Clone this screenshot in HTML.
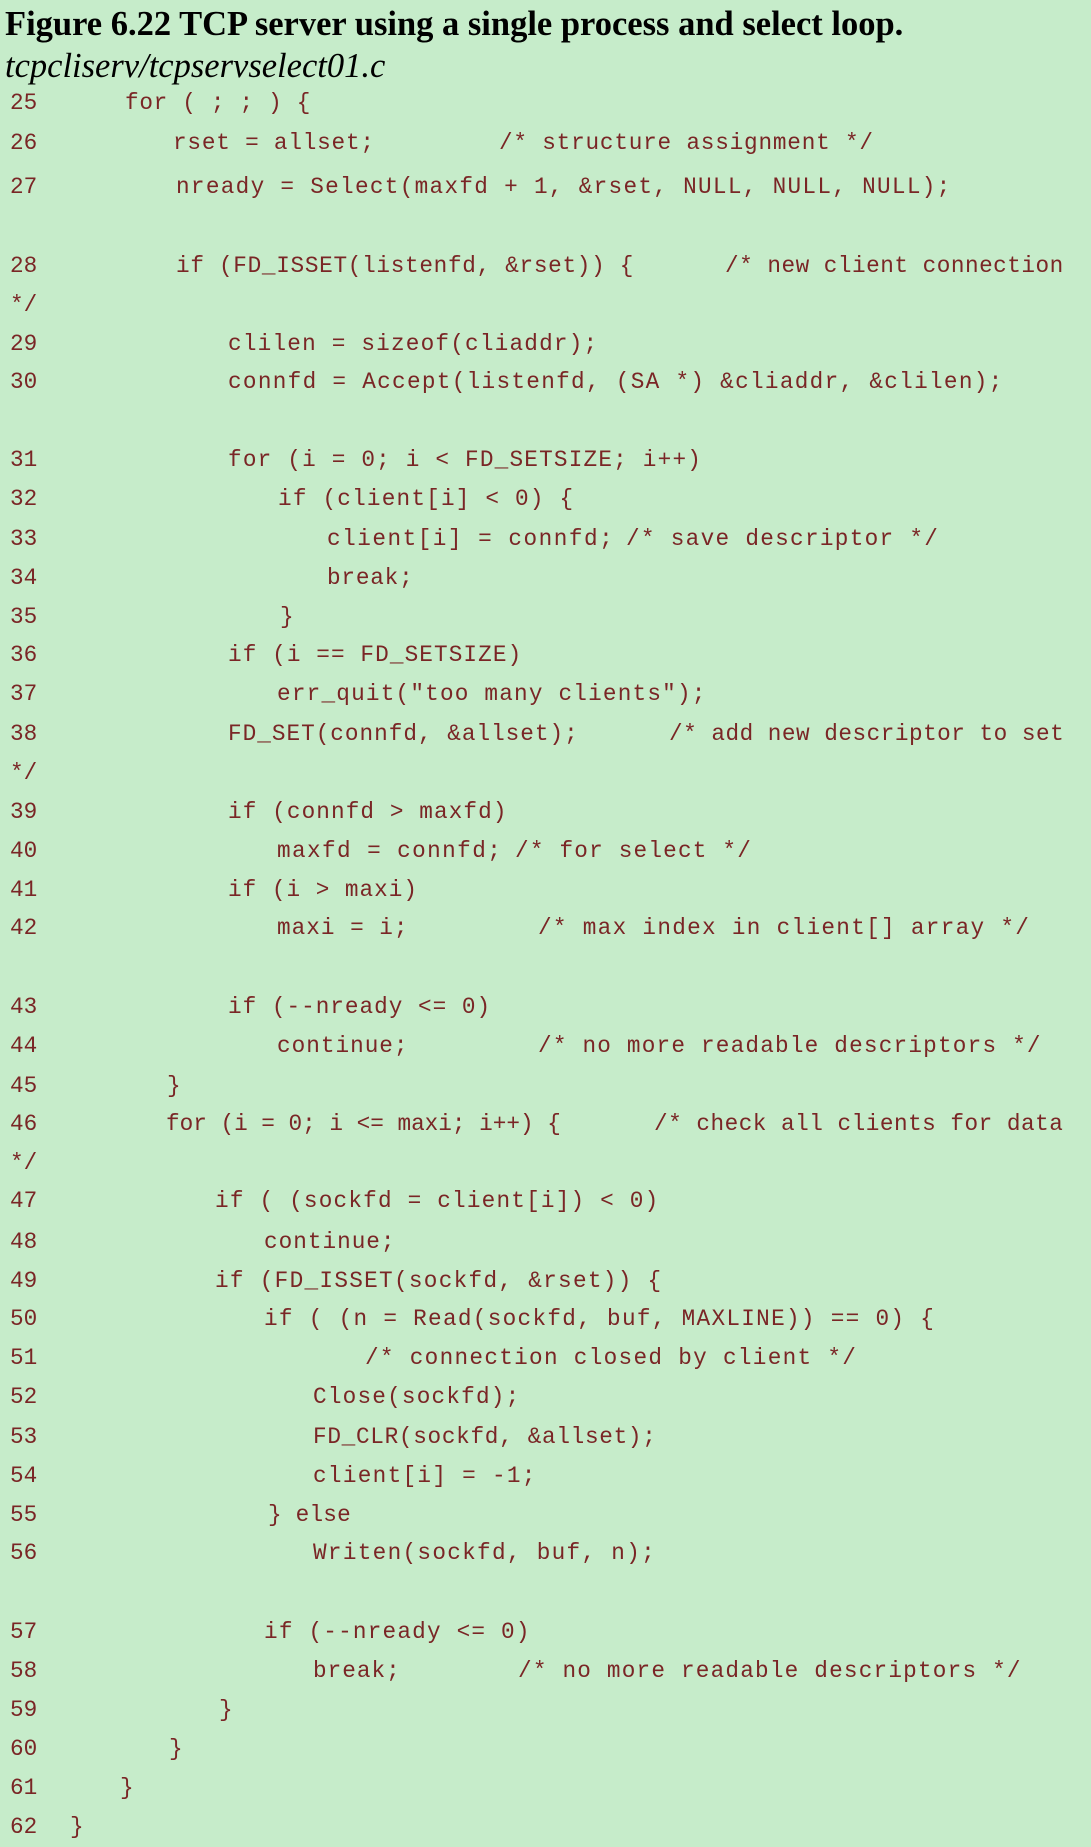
<!DOCTYPE html>
<html><head><meta charset="utf-8"><style>
html,body{margin:0;padding:0;}
body{width:1091px;height:1845px;background:#c6ecca;position:relative;overflow:hidden;}
.t{position:absolute;left:5px;top:5px;font-family:"Liberation Serif",serif;font-weight:bold;font-size:34.5px;color:#000;white-space:nowrap;}
.s{position:absolute;left:5px;top:47px;font-family:"Liberation Serif",serif;font-style:italic;font-size:34.5px;color:#000;white-space:nowrap;}
.l{position:absolute;font-family:"Liberation Mono",monospace;font-size:22.7px;line-height:40px;height:40px;color:#7a2626;white-space:pre;}
</style></head><body>
<div class="t">Figure 6.22 TCP server using a single process and select loop.</div>
<div class="s">tcpcliserv/tcpservselect01.c</div>

<div class="l" style="left:10px;top:83px">25</div><div class="l" style="left:125px;top:83px;letter-spacing:0.7px">for ( ; ; ) {</div>
<div class="l" style="left:10px;top:123px">26</div><div class="l" style="left:173px;top:123px;letter-spacing:0.8px">rset = allset;</div><div class="l" style="left:499px;top:123px;letter-spacing:0.8px">/* structure assignment */</div>
<div class="l" style="left:10px;top:167px">27</div><div class="l" style="left:176px;top:167px;letter-spacing:1.3px">nready = Select(maxfd + 1, &amp;rset, NULL, NULL, NULL);</div>
<div class="l" style="left:10px;top:246px">28</div><div class="l" style="left:176px;top:246px;letter-spacing:0.7px">if (FD_ISSET(listenfd, &amp;rset)) {</div><div class="l" style="left:725px;top:246px;letter-spacing:0.5px">/* new client connection</div>
<div class="l" style="left:10px;top:285px">*/</div>
<div class="l" style="left:10px;top:324px">29</div><div class="l" style="left:228px;top:324px;letter-spacing:1.2px">clilen = sizeof(cliaddr);</div>
<div class="l" style="left:10px;top:362px">30</div><div class="l" style="left:228px;top:362px;letter-spacing:1.3px">connfd = Accept(listenfd, (SA *) &amp;cliaddr, &amp;clilen);</div>
<div class="l" style="left:10px;top:440px">31</div><div class="l" style="left:228px;top:440px;letter-spacing:1.2px">for (i = 0; i &lt; FD_SETSIZE; i++)</div>
<div class="l" style="left:10px;top:479px">32</div><div class="l" style="left:278px;top:479px;letter-spacing:1.2px">if (client[i] &lt; 0) {</div>
<div class="l" style="left:10px;top:519px">33</div><div class="l" style="left:327px;top:519px;letter-spacing:1.5px">client[i] = connfd;</div><div class="l" style="left:626px;top:519px;letter-spacing:1.3px">/* save descriptor */</div>
<div class="l" style="left:10px;top:558px">34</div><div class="l" style="left:327px;top:558px;letter-spacing:0.8px">break;</div>
<div class="l" style="left:10px;top:597px">35</div><div class="l" style="left:280px;top:597px">}</div>
<div class="l" style="left:10px;top:635px">36</div><div class="l" style="left:228px;top:635px;letter-spacing:1.1px">if (i == FD_SETSIZE)</div>
<div class="l" style="left:10px;top:674px">37</div><div class="l" style="left:277px;top:674px;letter-spacing:1.2px">err_quit("too many clients");</div>
<div class="l" style="left:10px;top:714px">38</div><div class="l" style="left:228px;top:714px;letter-spacing:1.0px">FD_SET(connfd, &amp;allset);</div><div class="l" style="left:669px;top:714px;letter-spacing:0.5px">/* add new descriptor to set</div>
<div class="l" style="left:10px;top:753px">*/</div>
<div class="l" style="left:10px;top:792px">39</div><div class="l" style="left:228px;top:792px;letter-spacing:1.1px">if (connfd &gt; maxfd)</div>
<div class="l" style="left:10px;top:831px">40</div><div class="l" style="left:277px;top:831px;letter-spacing:1.4px">maxfd = connfd;</div><div class="l" style="left:515px;top:831px;letter-spacing:1.2px">/* for select */</div>
<div class="l" style="left:10px;top:870px">41</div><div class="l" style="left:228px;top:870px;letter-spacing:1.0px">if (i &gt; maxi)</div>
<div class="l" style="left:10px;top:908px">42</div><div class="l" style="left:277px;top:908px;letter-spacing:1.0px">maxi = i;</div><div class="l" style="left:538px;top:908px;letter-spacing:1.3px">/* max index in client[] array */</div>
<div class="l" style="left:10px;top:987px">43</div><div class="l" style="left:228px;top:987px;letter-spacing:1.0px">if (--nready &lt;= 0)</div>
<div class="l" style="left:10px;top:1026px">44</div><div class="l" style="left:277px;top:1026px;letter-spacing:1.0px">continue;</div><div class="l" style="left:538px;top:1026px;letter-spacing:1.2px">/* no more readable descriptors */</div>
<div class="l" style="left:10px;top:1066px">45</div><div class="l" style="left:167px;top:1066px">}</div>
<div class="l" style="left:10px;top:1104px">46</div><div class="l" style="left:166px;top:1104px">for (i = 0; i &lt;= maxi; i++) {</div><div class="l" style="left:654px;top:1104px;letter-spacing:0.5px">/* check all clients for data</div>
<div class="l" style="left:10px;top:1143px">*/</div>
<div class="l" style="left:10px;top:1181px">47</div><div class="l" style="left:215px;top:1181px;letter-spacing:1.2px">if ( (sockfd = client[i]) &lt; 0)</div>
<div class="l" style="left:10px;top:1222px">48</div><div class="l" style="left:264px;top:1222px;letter-spacing:1.0px">continue;</div>
<div class="l" style="left:10px;top:1261px">49</div><div class="l" style="left:215px;top:1261px;letter-spacing:1.3px">if (FD_ISSET(sockfd, &amp;rset)) {</div>
<div class="l" style="left:10px;top:1299px">50</div><div class="l" style="left:264px;top:1299px;letter-spacing:1.3px">if ( (n = Read(sockfd, buf, MAXLINE)) == 0) {</div>
<div class="l" style="left:10px;top:1338px">51</div><div class="l" style="left:365px;top:1338px;letter-spacing:1.3px">/* connection closed by client */</div>
<div class="l" style="left:10px;top:1377px">52</div><div class="l" style="left:313px;top:1377px;letter-spacing:1.2px">Close(sockfd);</div>
<div class="l" style="left:10px;top:1417px">53</div><div class="l" style="left:313px;top:1417px;letter-spacing:0.7px">FD_CLR(sockfd, &amp;allset);</div>
<div class="l" style="left:10px;top:1456px">54</div><div class="l" style="left:313px;top:1456px;letter-spacing:1.3px">client[i] = -1;</div>
<div class="l" style="left:10px;top:1495px">55</div><div class="l" style="left:268px;top:1495px;letter-spacing:0.2px">} else</div>
<div class="l" style="left:10px;top:1533px">56</div><div class="l" style="left:313px;top:1533px;letter-spacing:1.3px">Writen(sockfd, buf, n);</div>
<div class="l" style="left:10px;top:1612px">57</div><div class="l" style="left:264px;top:1612px;letter-spacing:1.2px">if (--nready &lt;= 0)</div>
<div class="l" style="left:10px;top:1651px">58</div><div class="l" style="left:313px;top:1651px;letter-spacing:1.0px">break;</div><div class="l" style="left:518px;top:1651px;letter-spacing:1.2px">/* no more readable descriptors */</div>
<div class="l" style="left:10px;top:1690px">59</div><div class="l" style="left:219px;top:1690px">}</div>
<div class="l" style="left:10px;top:1729px">60</div><div class="l" style="left:169px;top:1729px">}</div>
<div class="l" style="left:10px;top:1768px">61</div><div class="l" style="left:120px;top:1768px">}</div>
<div class="l" style="left:10px;top:1807px">62</div><div class="l" style="left:70px;top:1807px">}</div>
</body></html>
